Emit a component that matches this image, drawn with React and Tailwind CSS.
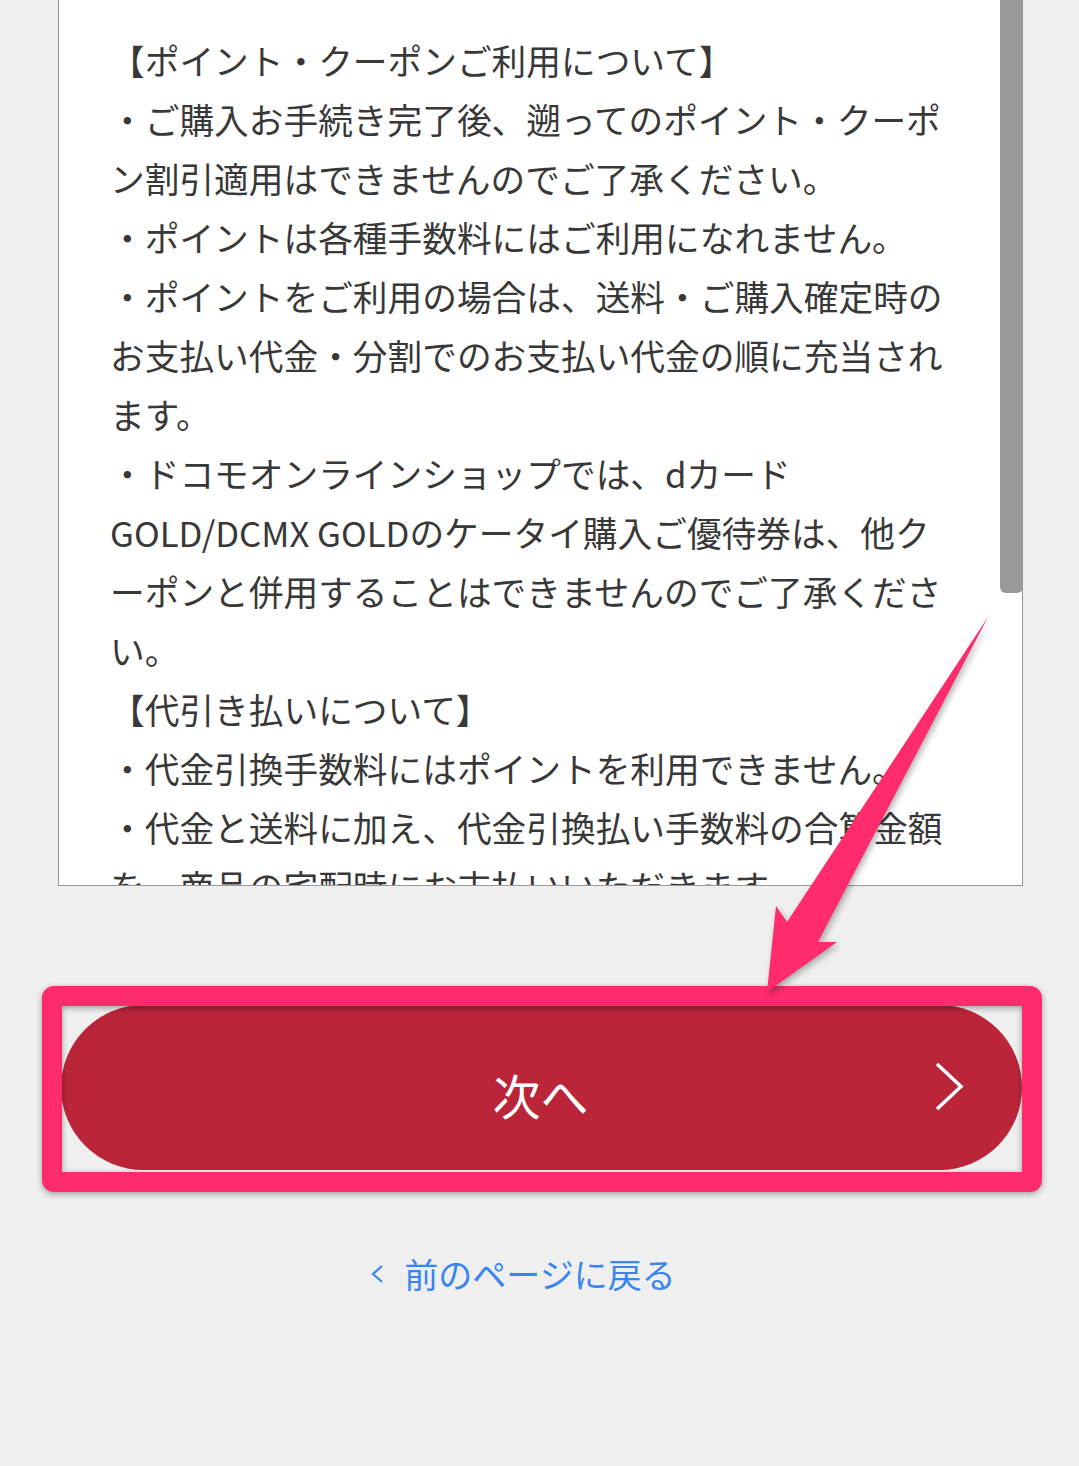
import React from 'react';

const lines = [
  '【ポイント・クーポンご利用について】',
  '・ご購入お手続き完了後、遡ってのポイント・クーポ',
  'ン割引適用はできませんのでご了承ください。',
  '・ポイントは各種手数料にはご利用になれません。',
  '・ポイントをご利用の場合は、送料・ご購入確定時の',
  'お支払い代金・分割でのお支払い代金の順に充当され',
  'ます。',
  '・ドコモオンラインショップでは、dカード',
  'GOLD/DCMX GOLDのケータイ購入ご優待券は、他ク',
  'ーポンと併用することはできませんのでご了承くださ',
  'い。',
  '【代引き払いについて】',
  '・代金引換手数料にはポイントを利用できません。',
  '・代金と送料に加え、代金引換払い手数料の合算金額',
  'を、商品の宅配時にお支払いいただきます。',
];

const App = () => {
  return (
    <div
      className="relative w-[1079px] h-[1466px] overflow-hidden bg-[#efefef]"
      style={{ fontFamily: '"Noto Sans CJK JP", "Noto Sans", sans-serif' }}
    >
      {/* terms box, scrolled */}
      <div className="relative ml-[58px] w-[965px] h-[886px] bg-white border-l border-r border-b border-[#9a9a9a]">
        <div className="h-full overflow-hidden pl-[51px] pt-[31px] text-[34.7px] leading-[59px] text-[#383838]">
          {lines.map((line, i) => (
            <div key={i} className="whitespace-nowrap">{line}</div>
          ))}
        </div>
        <div className="absolute top-0 right-[-1px] w-[23px] h-[593px] bg-[#999] rounded-b-[6px]" />
      </div>

      {/* next button */}
      <button className="mt-[119px] ml-[61px] w-[961px] h-[165px] rounded-full bg-[#ba2539] relative flex items-center justify-center text-white">
        <span className="text-[48px] leading-none pt-[12px] pr-[2px]">次へ</span>
        <svg className="absolute left-[872px] top-[56px]" width="34" height="52" viewBox="0 0 34 52" fill="none">
          <path d="M4 3 L28 25.5 L4 48" stroke="#fff" strokeWidth="3.5" />
        </svg>
      </button>

      {/* back link */}
      <div className="mt-[82px] pr-[33px] flex items-center justify-center gap-[20px] text-[#3a85ee]">
        <svg width="14" height="20" viewBox="0 0 14 20" fill="none">
          <path d="M12 2 L3 10 L12 18" stroke="currentColor" strokeWidth="2.2" />
        </svg>
        <span className="text-[34px] leading-[44px]">前のページに戻る</span>
      </div>

      {/* annotation frame */}
      <div className="absolute left-[42px] top-[986px] w-[1000px] h-[206px] border-[20px] border-[#fe2c6c] rounded-[12px] drop-shadow-[0_2px_3px_rgba(0,0,0,0.35)] pointer-events-none" />

      {/* annotation arrow */}
      <svg
        className="absolute left-0 top-0 pointer-events-none drop-shadow-[2px_3px_3px_rgba(0,0,0,0.3)]"
        width="1079"
        height="1466"
        viewBox="0 0 1079 1466"
      >
        <polygon
          points="988,617 818,942 837,942 767,992 776,906 787,922"
          fill="#fe2c6c"
        />
      </svg>
    </div>
  );
};

export default App;
